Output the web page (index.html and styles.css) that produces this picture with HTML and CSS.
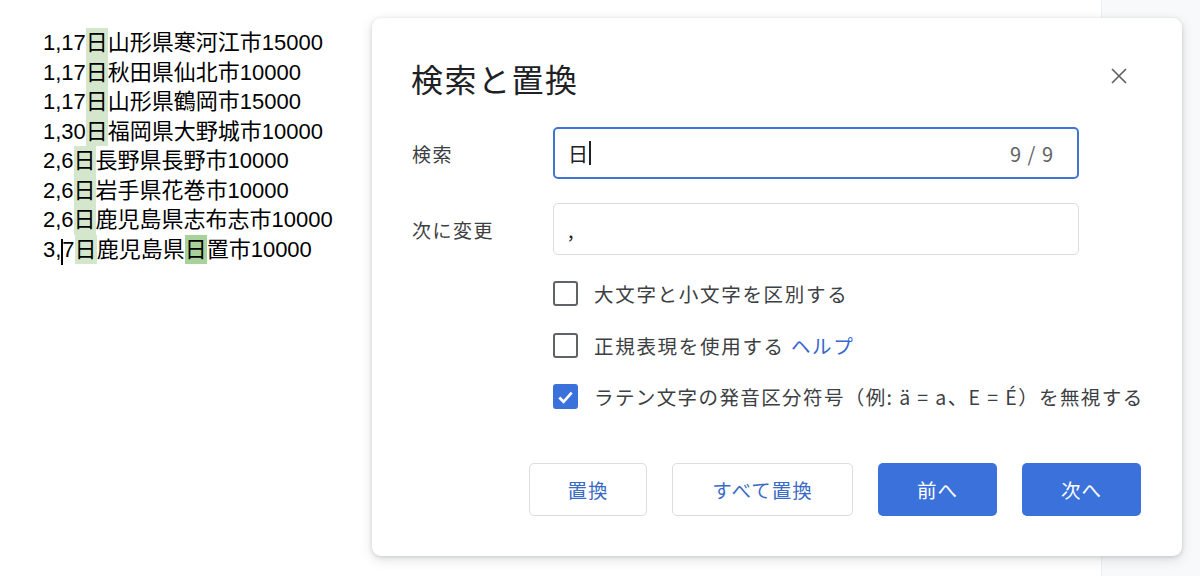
FILE: index.html
```html
<!DOCTYPE html>
<html lang="ja">
<head>
<meta charset="utf-8">
<title>検索と置換</title>
<link rel="stylesheet" href="styles.css">
</head>
<body>
<div class="screen">
  <div class="page">
    <div class="doc">
      <div class="line">1,17<span class="hl">日</span>山形県寒河江市15000</div>
      <div class="line">1,17<span class="hl">日</span>秋田県仙北市10000</div>
      <div class="line">1,17<span class="hl">日</span>山形県鶴岡市15000</div>
      <div class="line">1,30<span class="hl">日</span>福岡県大野城市10000</div>
      <div class="line">2,6<span class="hl">日</span>長野県長野市10000</div>
      <div class="line">2,6<span class="hl">日</span>岩手県花巻市10000</div>
      <div class="line">2,6<span class="hl">日</span>鹿児島県志布志市10000</div>
      <div class="line">3,<span class="caret"></span>7<span class="hl">日</span>鹿児島県<span class="hl hl-cur">日</span>置市10000</div>
    </div>
  </div>
  <div class="side"></div>

  <div class="dialog" role="dialog">
    <div class="dlg-head">
      <h1 class="dlg-title">検索と置換</h1>
      <button class="close" aria-label="閉じる">
        <svg width="16" height="16" viewBox="0 0 16 16"><path d="M1 1L15 15M15 1L1 15" stroke="#5f6368" stroke-width="1.7" fill="none"/></svg>
      </button>
    </div>
    <div class="field">
      <label class="field-label">検索</label>
      <div class="input input-focus"><span class="val">日<span class="tcaret"></span></span><span class="count">9 / 9</span></div>
    </div>
    <div class="field">
      <label class="field-label">次に変更</label>
      <div class="input"><span class="val">,</span></div>
    </div>
    <div class="options">
      <div class="opt"><span class="box"></span><span class="opt-text">大文字と小文字を区別する</span></div>
      <div class="opt"><span class="box"></span><span class="opt-text">正規表現を使用する <a class="help">ヘルプ</a></span></div>
      <div class="opt"><span class="box box-on"><svg width="22" height="22" viewBox="0 0 22 22"><path d="M4.5 11.5L9 16L17.5 6.5" stroke="#fff" stroke-width="2.8" fill="none"/></svg></span><span class="opt-text opt-long">ラテン文字の発音区分符号（例: ä = a、E = É）を無視する</span></div>
    </div>
    <div class="actions">
      <button class="btn btn-outline btn-w1">置換</button>
      <button class="btn btn-outline btn-w2">すべて置換</button>
      <button class="btn btn-fill">前へ</button>
      <button class="btn btn-fill">次へ</button>
    </div>
  </div>
</div>
</body>
</html>
```
FILE: styles.css
```css
* { box-sizing: border-box; }
html, body { margin: 0; padding: 0; }
body {
  font-family: "Liberation Sans", "Noto Sans CJK JP", sans-serif;
  color: #000;
  background: #fff;
}
.screen {
  position: relative;
  width: 1200px;
  height: 576px;
  display: flex;
  overflow: hidden;
}
.page {
  width: 1101px;
  background: #fff;
  padding: 28px 0 0 43px;
}
.side {
  flex: 1;
  background: #f8f9fa;
  border-left: 1px solid #eceef0;
}
.doc {
  font-size: 22px;
}
.line {
  height: 29.5px;
  line-height: 29.5px;
  white-space: nowrap;
}
.hl {
  display: inline-block;
  height: 29.5px;
  background: #d4e7cc;
}
.hl-cur { background: #a9d19b; }
.caret {
  display: inline-block;
  width: 2px;
  height: 26px;
  background: #000;
  vertical-align: -8px;
  margin-right: -1px;
}

/* dialog */
.dialog {
  position: absolute;
  left: 372px;
  top: 18px;
  width: 810px;
  height: 538px;
  background: #fff;
  border-radius: 9px;
  box-shadow: 0 4px 12px rgba(60, 64, 67, 0.15), 0 1px 4px rgba(60, 64, 67, 0.18);
  padding: 0 41px 0 40px;
  font-family: "Noto Sans CJK JP", "Liberation Sans", sans-serif;
}
.dlg-head {
  height: 80px;
  padding-top: 40px;
  display: flex;
  justify-content: space-between;
  align-items: center;
}
.dlg-title {
  margin: 0 0 0 -1px;
  font-size: 32px;
  font-weight: 400;
  line-height: 40px;
  letter-spacing: 1.5px;
  color: #202124;
}
.close {
  border: 0;
  background: none;
  padding: 0;
  width: 16px;
  height: 16px;
  margin-right: 14px;
  margin-top: -4px;
  display: flex;
}
.field {
  display: grid;
  grid-template-columns: 141px 526px;
  align-items: center;
  margin-top: 24px;
}
.dlg-head + .field { margin-top: 29px; }
.field-label {
  font-size: 19px;
  color: #3c4043;
  letter-spacing: 1.5px;
}
.input {
  height: 52px;
  border: 1px solid #dadce0;
  border-radius: 5px;
  display: flex;
  align-items: center;
  justify-content: space-between;
  padding: 0 23px 0 14px;
  font-size: 20px;
  color: #202124;
}
.input-focus {
  border: 2px solid #4275d1;
  padding-left: 13px;
}
.val { display: flex; align-items: center; }
.tcaret {
  display: inline-block;
  width: 1.5px;
  height: 24px;
  background: #202124;
  margin-left: 1px;
}
.count {
  color: #5f6368;
  font-size: 20px;
  letter-spacing: 1px;
}
.options {
  margin: 13px 0 0 141px;
}
.opt {
  height: 51.5px;
  display: flex;
  align-items: center;
}
.box {
  width: 25px;
  height: 25px;
  border: 2px solid #5f6368;
  border-radius: 3px;
  margin-right: 16px;
  flex: none;
  display: flex;
  align-items: center;
  justify-content: center;
}
.box-on {
  background: #3b71db;
  border-color: #3b71db;
}
.opt-text {
  font-size: 19.5px;
  color: #3c4043;
  letter-spacing: 1.7px;
  white-space: nowrap;
}
.opt-long { letter-spacing: 1.4px; }
.help { color: #3467cf; }
.actions {
  margin-top: 40px;
  display: flex;
  justify-content: flex-end;
  gap: 25px;
}
.btn {
  height: 53px;
  border-radius: 5px;
  font-family: "Noto Sans CJK JP", "Liberation Sans", sans-serif;
  font-size: 19.5px;
  letter-spacing: 1px;
  padding: 0;
}
.btn-outline {
  background: #fff;
  border: 1px solid #dadce0;
  color: #3a6bc6;
}
.btn-w1 { width: 118px; }
.btn-w2 { width: 181px; }
.btn-fill {
  width: 119px;
  background: #3b71db;
  border: 0;
  color: #fff;
}
```
